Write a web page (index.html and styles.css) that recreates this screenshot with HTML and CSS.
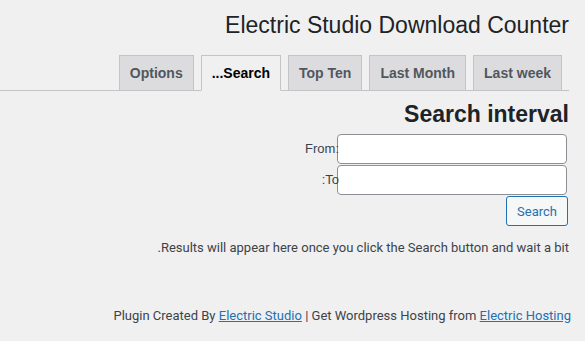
FILE: index.html
```html
<!DOCTYPE html>
<html lang="en" dir="rtl">
<head>
<meta charset="UTF-8">
<title>Electric Studio Download Counter</title>
<link rel="stylesheet" href="styles.css">
</head>
<body>

<div class="wrap">
    <h1 class="page-title">Electric Studio Download Counter</h1>

    <nav class="nav-tab-wrapper">
        <a href="#" class="nav-tab">Last week</a>
        <a href="#" class="nav-tab">Last Month</a>
        <a href="#" class="nav-tab">Top Ten</a>
        <a href="#" class="nav-tab nav-tab-active">Search...</a>
        <a href="#" class="nav-tab">Options</a>
    </nav>

    <h2 class="section-title">Search interval</h2>

    <form class="search-form">
        <div class="field-grid">
            <input type="text" id="from-date">
            <label for="from-date">:From</label>
            <input type="text" id="to-date">
            <label for="to-date">To:</label>
        </div>
        <div class="form-actions">
            <button type="button" class="button">Search</button>
        </div>
    </form>

    <p class="results">Results will appear here once you click the Search button and wait a bit.</p>

    <p class="credits" dir="ltr">Plugin Created By <a href="#">Electric Studio</a> | Get Wordpress Hosting from <a href="#">Electric Hosting</a></p>
</div>

</body>
</html>
```

FILE: styles.css
```css
/* Base */
body {
    margin: 0;
    background: #f0f0f1;
    color: #3c434a;
    font-family: Roboto, "Noto Sans", sans-serif;
    font-size: 13px;
    line-height: 1.4;
}

.wrap {
    padding: 0 16px 0 0;
}

.page-title {
    font-family: "Liberation Sans", Arial, sans-serif;
    font-size: 23px;
    font-weight: 400;
    color: #1d2327;
    margin: 0;
    padding: 11px 0 4px 0;
    line-height: 1.3;
}

/* Tabs */
.nav-tab-wrapper {
    display: flex;
    border-bottom: 1px solid #c3c4c7;
    padding-top: 10px;
}

.nav-tab {
    font-family: "Liberation Sans", Arial, sans-serif;
    font-size: 14px;
    font-weight: 700;
    line-height: 24px;
    padding: 5px 10px;
    margin-right: 7px;
    margin-bottom: -1px;
    border: 1px solid #c3c4c7;
    background: #dcdcde;
    color: #50575e;
    text-decoration: none;
}

.nav-tab-active {
    background: #f0f0f1;
    border-bottom-color: #f0f0f1;
    color: #000;
}

.section-title {
    font-family: "Liberation Sans", Arial, sans-serif;
    font-size: 23px;
    font-weight: 700;
    color: #1d2327;
    margin: 10px 0 6px;
    line-height: 1.2;
}

/* Form */
.field-grid {
    display: grid;
    grid-template-columns: 230px auto;
    justify-content: start;
    row-gap: 1px;
    align-items: center;
}

.field-grid label {
    font-family: "Liberation Sans", Arial, sans-serif;
    font-size: 13px;
    color: #3c434a;
    padding-left: 1px;
}

.field-grid input {
    box-sizing: border-box;
    height: 30px;
    width: 230px;
    border: 1px solid #8c8f94;
    border-radius: 4px;
    background: #fff;
    margin: 0 2px 0 0;
}

.form-actions {
    display: flex;
    margin-top: 1px;
}

.button {
    font-family: Roboto, "Noto Sans", sans-serif;
    font-size: 13px;
    color: #2271b1;
    border: 1px solid #2271b1;
    background: #f6f7f7;
    border-radius: 3px;
    height: 30px;
    padding: 0 10px;
    margin-right: 1px;
    cursor: pointer;
}

.results {
    margin: 13px 0 0;
}

.credits {
    text-align: right;
    margin: 49px 0 0;
    margin-right: -2px;
}

.credits a {
    color: #2271b1;
}
```
